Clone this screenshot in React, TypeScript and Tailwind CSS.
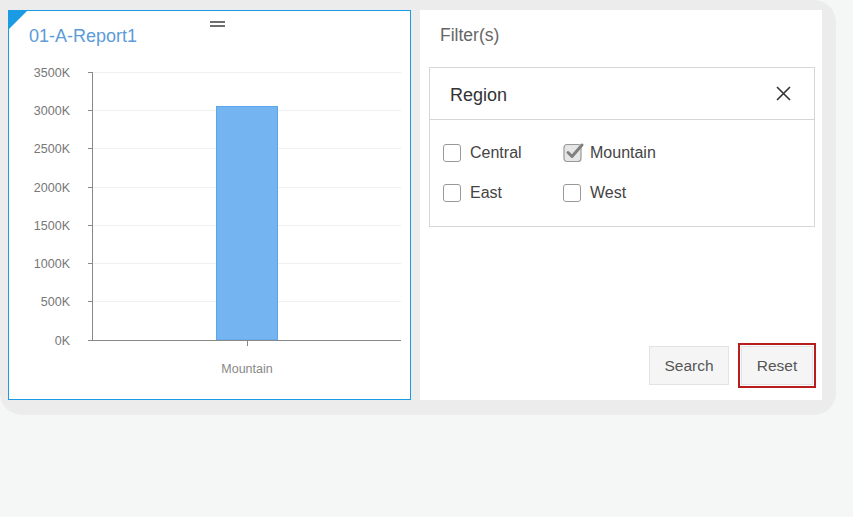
import React from "react";

const ticks = [
  { label: "3500K", y: 12 },
  { label: "3000K", y: 50 },
  { label: "2500K", y: 88 },
  { label: "2000K", y: 127 },
  { label: "1500K", y: 165 },
  { label: "1000K", y: 203 },
  { label: "500K", y: 241 },
  { label: "0K", y: 280 },
];

function Chart() {
  return (
    <svg width="401" height="330" className="block" style={{ fontFamily: '"Liberation Sans", Arial, sans-serif' }}>
      {ticks.map((t) => (
        <g key={t.label}>
          {t.y !== 280 && <line x1="84" x2="392" y1={t.y + 0.5} y2={t.y + 0.5} stroke="#f0f0f0" strokeWidth="1" />}
          <line x1="79" x2="83" y1={t.y + 0.5} y2={t.y + 0.5} stroke="#888" strokeWidth="1" />
          <text x="61" y={t.y + 4.5} textAnchor="end" fontSize="12.5" fill="#777">
            {t.label}
          </text>
        </g>
      ))}
      <line x1="83.5" x2="83.5" y1="12" y2="281" stroke="#888" strokeWidth="1" />
      <rect x="207.5" y="46.5" width="61" height="233.5" fill="#74b4f0" stroke="#5aa6ea" strokeWidth="1" />
      <line x1="83" x2="392" y1="280.5" y2="280.5" stroke="#888" strokeWidth="1" />
      <line x1="238.5" x2="238.5" y1="281" y2="286" stroke="#888" strokeWidth="1" />
      <text x="238" y="313" textAnchor="middle" fontSize="12.5" fill="#888">
        Mountain
      </text>
    </svg>
  );
}

function Checkbox({ checked }: { checked?: boolean }) {
  if (checked) {
    return (
      <svg width="22" height="20" viewBox="0 0 22 20" className="block -mr-[4px] -mt-[2px]">
        <rect x="1" y="2.5" width="17" height="17" rx="3" fill="#e6e6e6" stroke="#999" strokeWidth="1.2" />
        <path d="M5 10.5 L9 14.5 L19 3" fill="none" stroke="#808080" strokeWidth="3" strokeLinecap="round" strokeLinejoin="round" />
      </svg>
    );
  }
  return <div className="w-[18px] h-[18px] rounded-[3px] border-[1.5px] border-[#999] bg-white" />;
}

function Option({ label, checked }: { label: string; checked?: boolean }) {
  return (
    <div className="flex items-center w-[120px] h-[20px]">
      <Checkbox checked={checked} />
      <span className="ml-[9px] text-[16px] text-[#444] leading-none">{label}</span>
    </div>
  );
}

export default function App() {
  return (
    <div
      className="w-[853px] h-[517px] bg-[#f5f6f6] overflow-hidden"
      style={{ fontFamily: '"Liberation Sans", Arial, sans-serif' }}
    >
      <div className="relative w-[836px] h-[415px] bg-[#ececec] rounded-b-[22px] rounded-tr-[22px] flex gap-[9px] pl-[8px] pt-[10px]">
        {/* left card */}
        <div className="relative w-[403px] h-[390px] bg-white border border-[#1a9be3]">
          <svg width="18" height="18" className="absolute left-0 top-0">
            <polygon points="0,0 18,0 0,18" fill="#1a9be3" />
          </svg>
          <div className="absolute left-[201px] top-[10px] flex flex-col gap-[2px]">
            <div className="w-[15px] h-[2px] bg-[#6f6f6f]" />
            <div className="w-[15px] h-[2px] bg-[#6f6f6f]" />
          </div>
          <div className="h-[49px] pt-[13px] pl-[20px]">
            <span className="text-[18px] leading-[24px] text-[#5b9bd8]">01-A-Report1</span>
          </div>
          <Chart />
        </div>
        {/* right panel */}
        <div className="relative w-[402px] h-[390px] bg-white flex flex-col">
          <div className="h-[57px] pl-[20px] pt-[13px]">
            <span className="text-[17.5px] leading-[24px] text-[#666]">Filter(s)</span>
          </div>
          <div className="ml-[9px] w-[386px] h-[160px] border border-[#d6d6d6]">
            <div className="h-[52px] border-b border-[#d6d6d6] flex items-center justify-between pl-[20px] pr-[23px] pt-[3px]">
              <span className="text-[18px] text-[#333]">Region</span>
              <svg width="15" height="15" viewBox="0 0 15 15" className="-mt-[4px]">
                <path d="M1 1 L14 14 M14 1 L1 14" stroke="#333" strokeWidth="1.6" />
              </svg>
            </div>
            <div className="pl-[13px] pt-[23px] flex flex-col gap-[20px]">
              <div className="flex">
                <Option label="Central" />
                <Option label="Mountain" checked />
              </div>
              <div className="flex">
                <Option label="East" />
                <Option label="West" />
              </div>
            </div>
          </div>
          <div className="flex-1" />
          <div className="flex justify-end items-center gap-[9px] pr-[6px] pb-[12px]">
            <button className="w-[80px] h-[39px] bg-[#f5f5f5] border border-[#e3e3e3] text-[15.5px] text-[#555]">
              Search
            </button>
            <div className="border-2 border-[#b81c1c] p-px">
              <button className="w-[72px] h-[39px] bg-[#f5f5f5] border border-[#e3e3e3] text-[15.5px] text-[#555]">
                Reset
              </button>
            </div>
          </div>
        </div>
      </div>
    </div>
  );
}
